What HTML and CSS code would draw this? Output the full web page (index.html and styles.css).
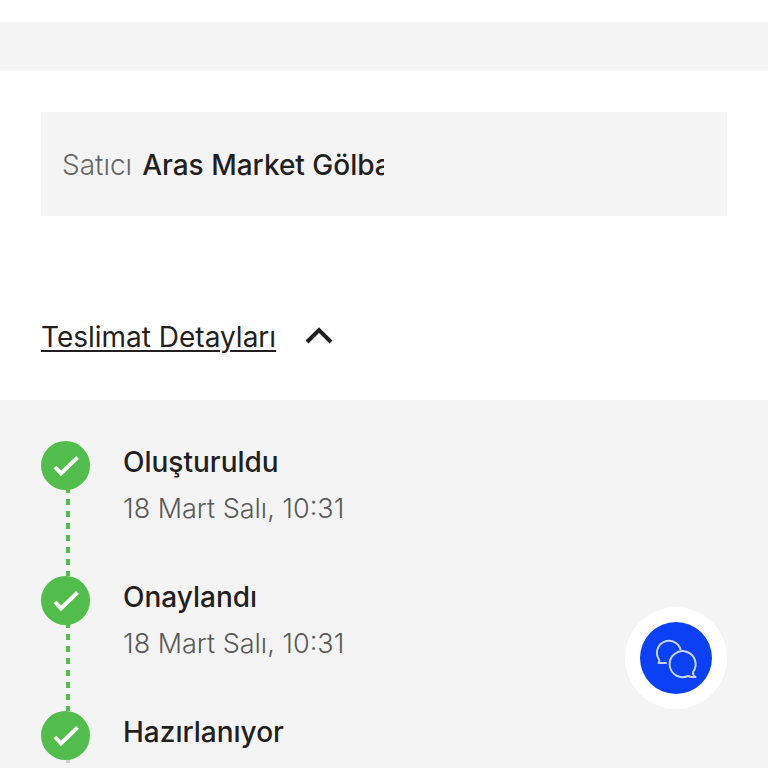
FILE: index.html
```html
<!DOCTYPE html>
<html lang="tr">

<head>
  <meta charset="UTF-8">
  <meta name="viewport" content="width=device-width, initial-scale=1.0">
  <title>Teslimat Detayları</title>
  <link rel="stylesheet" href="styles.css">
</head>

<body>
  <div class="divider"></div>
  <main class="order">
    <section class="summary">
      <div class="seller">
        <span class="seller-label">Satıcı</span>
        <span class="seller-name">Aras Market Gölba</span>
      </div>
      <button class="toggle" type="button" aria-expanded="true" aria-controls="steps">
        <span class="toggle-text">Teslimat Detayları</span>
        <svg class="chevron" viewBox="0 0 28 20" aria-hidden="true">
          <path d="M2 15 14 3l12 12" />
        </svg>
      </button>
    </section>
    <ol class="steps" id="steps">
      <li class="step">
        <div class="track">
          <svg class="check" viewBox="0 0 49 49" aria-hidden="true">
            <circle cx="24.500" cy="24.500" r="24.500" />
            <path d="M14 26l6 6.500L36.500 16.500" />
          </svg>
        </div>
        <div class="step-body">
          <h2 class="step-title">Oluşturuldu</h2>
          <time class="step-date" datetime="2025-03-18T10:31">18 Mart Salı, 10:31</time>
        </div>
      </li>
      <li class="step">
        <div class="track">
          <svg class="check" viewBox="0 0 49 49" aria-hidden="true">
            <circle cx="24.500" cy="24.500" r="24.500" />
            <path d="M14 26l6 6.500L36.500 16.500" />
          </svg>
        </div>
        <div class="step-body">
          <h2 class="step-title">Onaylandı</h2>
          <time class="step-date" datetime="2025-03-18T10:31">18 Mart Salı, 10:31</time>
        </div>
      </li>
      <li class="step current">
        <div class="track">
          <svg class="check" viewBox="0 0 49 49" aria-hidden="true">
            <circle cx="24.500" cy="24.500" r="24.500" />
            <path d="M14 26l6 6.500L36.500 16.500" />
          </svg>
        </div>
        <div class="step-body">
          <h2 class="step-title">Hazırlanıyor</h2>
        </div>
      </li>
    </ol>
  </main>
  <button class="chat" type="button" aria-label="Canlı destek">
    <svg class="chat-icon" viewBox="0 0 72 72" aria-hidden="true">
      <circle class="chat-disc" cx="36" cy="36" r="36" />
      <path d="M40.500 27.500A12 12 0 1 0 19 37.500Q20 39 18.500 41H26" />
      <path d="M53 50A13 13 0 1 0 48 54Q51 55.500 55.500 55Q52.500 53.500 53 50Z" />
    </svg>
  </button>
</body>

</html>
```

FILE: styles.css
```css
* {
  box-sizing: border-box;
}

body {
  display: flex;
  flex-direction: column;
  height: 100vh;
  margin: 0;
  padding-top: 22px;
  overflow: hidden;
  background: #fff;
  color: #231f20;
  font-family: Inter, "Liberation Sans", sans-serif;
  font-size: 28px;
  line-height: 42px;
}

button {
  padding: 0;
  border: 0;
  background: none;
  color: inherit;
  font: inherit;
  cursor: pointer;
}

.divider {
  flex: none;
  height: 49px;
  background: #f4f4f4;
}

.order {
  display: flex;
  flex: 1;
  flex-direction: column;
  min-height: 0;
}

.summary {
  padding: 41px 41px 42px;
}

.seller {
  display: flex;
  gap: 10px;
  margin-bottom: 100px;
  padding: 32px 21px 30px;
  background: #f4f4f4;
}

.seller-label {
  color: #666;
  font-weight: 300;
}

.seller-name {
  width: 242px;
  overflow: hidden;
  font-weight: 500;
  white-space: nowrap;
}

.toggle {
  display: flex;
  align-items: center;
  gap: 29px;
}

.toggle-text {
  text-decoration: underline;
  text-decoration-thickness: 2px;
  text-underline-offset: 3px;
}

.chevron {
  width: 28px;
  height: 20px;
  fill: none;
  stroke: #231f20;
  stroke-width: 4;
}

.steps {
  flex: 1;
  min-height: 0;
  margin: 0;
  padding: 41px 41px 0;
  overflow: hidden;
  background: #f4f4f4;
  list-style: none;
}

.step {
  display: flex;
  gap: 33px;
  height: 135px;
}

/* dashed connector between the check marks */
.track {
  width: 49px;
  background: repeating-linear-gradient(#52bc4c 0 6px, transparent 6px 12px) 25px 46px / 4px 100% no-repeat;
}

.current .track {
  background-image: repeating-linear-gradient(#ccc 0 6px, transparent 6px 12px);
}

.check {
  display: block;
  width: 49px;
  height: 49px;
  fill: #52bc4c;
}

.check path {
  fill: none;
  stroke: #fff;
  stroke-width: 4;
}

.step-title,
.step-date {
  display: block;
  margin: 0;
}

.step-title {
  margin-bottom: 5px;
  font-size: 28px;
  font-weight: 500;
}

.step-date {
  color: #595959;
  font-size: 27px;
  font-weight: 300;
}

.chat {
  position: fixed;
  right: 41px;
  bottom: 59px;
  display: grid;
  place-items: center;
  width: 102px;
  height: 102px;
  border-radius: 50%;
  background: #fff;
}

.chat-icon {
  width: 72px;
  height: 72px;
  fill: none;
  stroke: #c5d5ff;
  stroke-width: 2;
  stroke-linecap: round;
  stroke-linejoin: round;
}

.chat-disc {
  fill: #0b40f5;
  stroke: none;
}
```
